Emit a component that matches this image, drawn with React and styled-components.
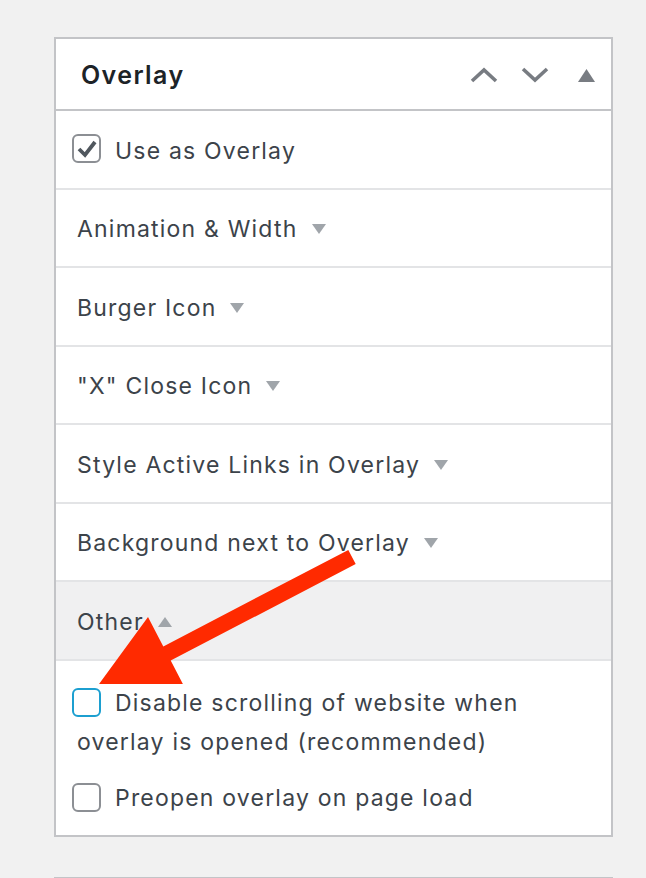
import React from 'react';
import styled, { createGlobalStyle } from 'styled-components';

const Global = createGlobalStyle`
  html, body { margin: 0; padding: 0; background: #f1f1f1; }
  body { font-family: Inter, "Noto Sans", sans-serif; -webkit-font-smoothing: antialiased; }
`;

const Page = styled.div`
  position: relative;
  width: 646px;
  height: 878px;
  overflow: hidden;
  box-sizing: border-box;
  padding: 37px 0 0 54px;
`;

const Panel = styled.section`
  width: 559px;
  box-sizing: border-box;
  border: 2px solid #c3c4c7;
  background: #fff;
`;

const NextPanel = styled.section`
  width: 559px;
  height: 40px;
  margin-top: 40px;
  box-sizing: border-box;
  border-top: 2px solid #c3c4c7;
  background: #fff;
`;

const Header = styled.header`
  height: 72px;
  display: flex;
  align-items: center;
  padding: 2px 16px 0 25px;
  box-sizing: border-box;
  border-bottom: 2px solid #c3c4c7;
`;

const Title = styled.h2`
  margin: 0;
  flex: 1;
  font-size: 25px;
  font-weight: 600;
  color: #1d2327;
  letter-spacing: 1.4px;
`;

const Actions = styled.div`
  display: flex;
  align-items: center;
  color: #787c82;
`;

const IconBtn = styled.span`
  display: inline-flex;
  margin-left: ${p => p.$gap || 0}px;
`;

const Row = styled.div`
  height: 78.5px;
  box-sizing: border-box;
  display: flex;
  align-items: center;
  padding: 3px 0 0 21px;
  border-bottom: 2px solid #e3e4e6;
  background: ${p => (p.$active ? '#f0f0f1' : '#fff')};
  font-size: 23px;
  color: #3c434a;
  letter-spacing: 1.2px;
`;

const Caret = styled.svg`
  margin-left: 14px;
  color: #a0a5aa;
`;

const Content = styled.div`
  padding: 23.5px 21px 17px 21px;
  display: flex;
  flex-direction: column;
  gap: 17px;
  font-size: 23px;
  line-height: 39px;
  color: #3c434a;
  letter-spacing: 1.2px;
`;

const Option = styled.label`
  display: block;
`;

const Box = styled.span`
  display: inline-flex;
  align-items: center;
  justify-content: center;
  width: 29px;
  height: 29px;
  box-sizing: border-box;
  border: 2px solid ${p => (p.$focus ? '#1c9fd0' : '#8c8f94')};
  border-radius: 6px;
  vertical-align: middle;
  margin: -4px 14px 0 -5px;
  background: #fff;
  flex-shrink: 0;
`;

const ArrowLayer = styled.svg`
  position: absolute;
  left: 0;
  top: 0;
  pointer-events: none;
`;

function Chevron({ up }) {
  return (
    <svg width="28" height="16" viewBox="0 0 28 16">
      <polyline
        points={up ? '2,14 14,3 26,14' : '2,2 14,13 26,2'}
        fill="none"
        stroke="currentColor"
        strokeWidth="3.6"
        strokeLinejoin="miter"
      />
    </svg>
  );
}

function DownCaret() {
  return (
    <Caret width="14" height="10" viewBox="0 0 14 10">
      <polygon points="0,0 14,0 7,10" fill="currentColor" />
    </Caret>
  );
}

function UpCaret() {
  return (
    <Caret width="14" height="10" viewBox="0 0 14 10">
      <polygon points="0,10 14,10 7,0" fill="currentColor" />
    </Caret>
  );
}

function Checkbox({ checked, focus }) {
  return (
    <Box $focus={focus}>
      {checked && (
        <svg width="22" height="20" viewBox="0 0 22 20">
          <polyline points="3,10 9,16 19,3" fill="none" stroke="#50575e" strokeWidth="3.8" />
        </svg>
      )}
    </Box>
  );
}

const sections = [
  'Animation & Width',
  'Burger Icon',
  '"X" Close Icon',
  'Style Active Links in Overlay',
  'Background next to Overlay',
];

export default function App() {
  return (
    <Page>
      <Global />
      <Panel>
        <Header>
          <Title>Overlay</Title>
          <Actions>
            <IconBtn><Chevron up /></IconBtn>
            <IconBtn $gap={23}><Chevron /></IconBtn>
            <IconBtn $gap={29}>
              <svg width="17" height="13" viewBox="0 0 17 13">
                <polygon points="0,13 17,13 8.5,0" fill="currentColor" />
              </svg>
            </IconBtn>
          </Actions>
        </Header>
        <Row>
          <Checkbox checked />
          Use as Overlay
        </Row>
        {sections.map(s => (
          <Row key={s}>
            {s}
            <DownCaret />
          </Row>
        ))}
        <Row $active>
          Other
          <UpCaret />
        </Row>
        <Content>
          <Option>
            <Checkbox focus />
            Disable scrolling of website when overlay is opened (recommended)
          </Option>
          <Option>
            <Checkbox />
            Preopen overlay on page load
          </Option>
        </Content>
      </Panel>
      <NextPanel />
      <ArrowLayer width="646" height="878" viewBox="0 0 646 878">
        <defs>
          <clipPath id="arrowClip">
            <rect x="0" y="0" width="646" height="684" />
          </clipPath>
        </defs>
        <polygon
          clipPath="url(#arrowClip)"
          fill="#ff2a00"
          points="348.3,549.9 355.7,564.1 170.7,660.6 186,690 92.7,692.7 148,617 163.3,646.4"
        />
      </ArrowLayer>
    </Page>
  );
}
